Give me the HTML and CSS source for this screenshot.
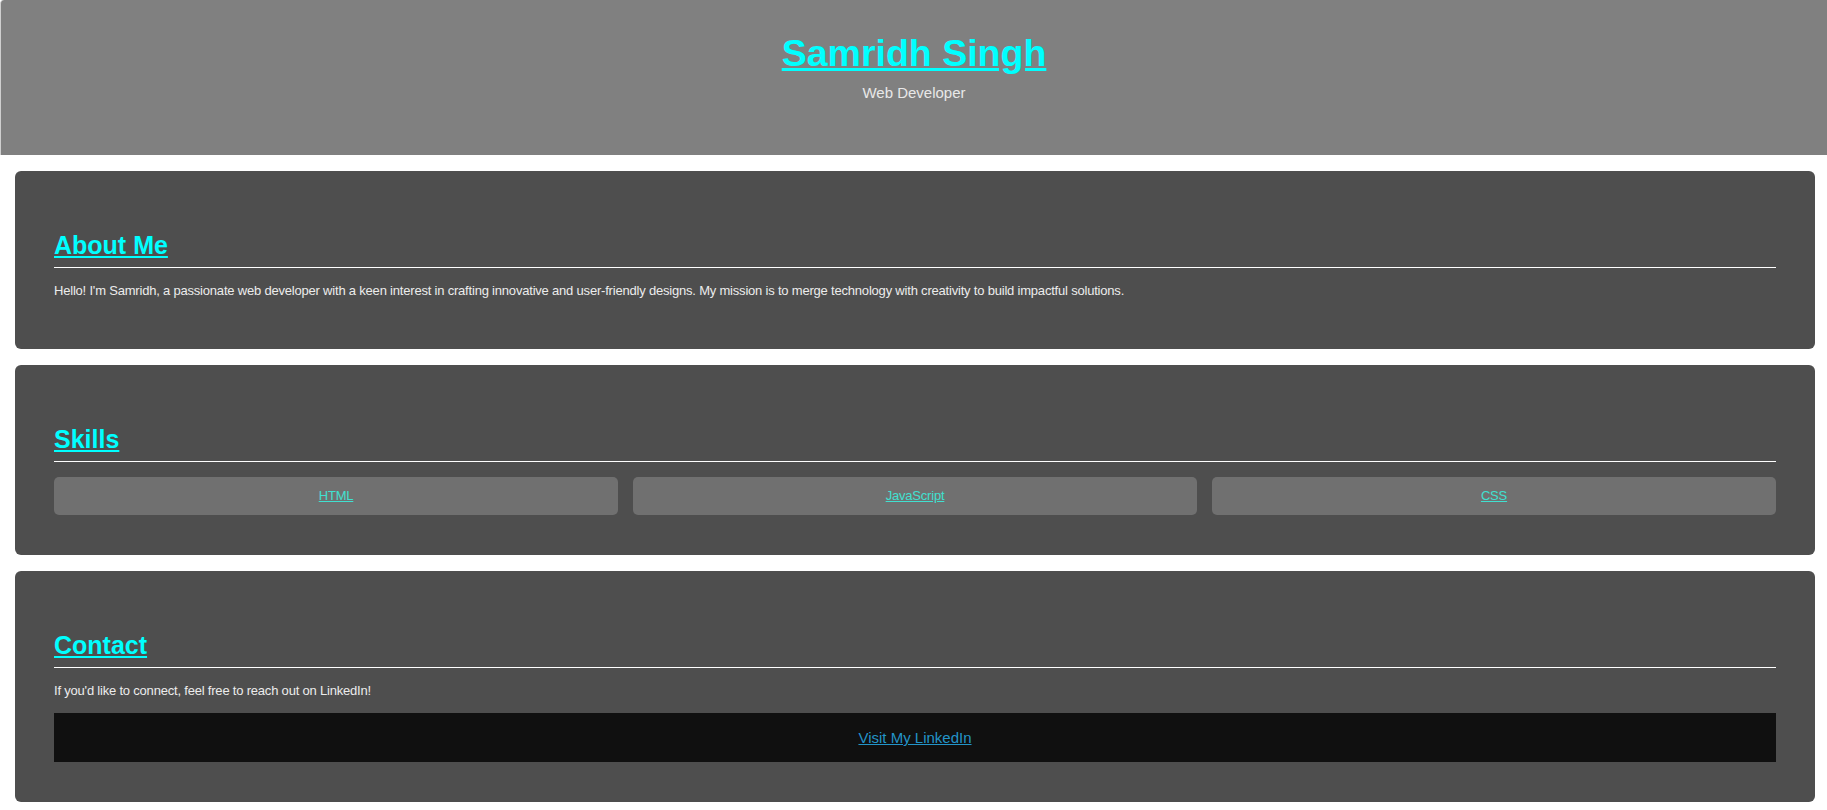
FILE: index.html
```html
<!DOCTYPE html>
<html lang="en">
<head>
<meta charset="utf-8">
<title>Samridh Singh</title>
<link rel="stylesheet" href="styles.css">
</head>
<body>
<header class="site-header">
  <h1 class="site-title"><a href="#">Samridh Singh</a></h1>
  <p class="site-subtitle">Web Developer</p>
</header>

<main class="content">
  <section class="card">
    <h2 class="card-title"><a href="#">About Me</a></h2>
    <p class="card-text">Hello! I'm Samridh, a passionate web developer with a keen interest in crafting innovative and user-friendly designs. My mission is to merge technology with creativity to build impactful solutions.</p>
  </section>

  <section class="card">
    <h2 class="card-title"><a href="#">Skills</a></h2>
    <div class="skills">
      <div class="skill"><a href="#">HTML</a></div>
      <div class="skill"><a href="#">JavaScript</a></div>
      <div class="skill"><a href="#">CSS</a></div>
    </div>
  </section>

  <section class="card">
    <h2 class="card-title"><a href="#">Contact</a></h2>
    <p class="card-text">If you'd like to connect, feel free to reach out on LinkedIn!</p>
    <div class="linkedin"><a href="#">Visit My LinkedIn</a></div>
  </section>
</main>
</body>
</html>
```

FILE: styles.css
```css
html, body {
  margin: 0;
  padding: 0;
  background: #ffffff;
}

body {
  font-family: "Liberation Sans", Arial, sans-serif;
  font-size: 15px;
  color: #e6e6e6;
}

.site-header {
  background: #808080;
  text-align: center;
  padding: 32px 20px 54px;
  border-left: 1px solid #cfcfcf;
  border-radius: 4px 0 0 0;
}

.site-title {
  margin: 0 0 9px;
  font-size: 37.5px;
  font-weight: bold;
  line-height: normal;
}

.site-title a {
  color: #00ffff;
  text-decoration: underline;
}

.site-subtitle {
  margin: 0;
  font-size: 15px;
  color: #e8e8e8;
}

.content {
  display: flex;
  flex-direction: column;
  gap: 16px;
  padding: 16px 12px 10px 15px;
}

.card {
  background: #4e4e4e;
  border-radius: 6px;
  padding: 60px 39px 36px;
}

.card-title {
  margin: 0;
  font-size: 25px;
  font-weight: bold;
  line-height: normal;
  padding-bottom: 7px;
  border-bottom: 1px solid #ffffff;
}

.card-title a {
  color: #00ffff;
  text-decoration: underline;
}

.card-text {
  margin: 14px 0 14px;
  font-size: 13px;
  letter-spacing: -0.2px;
  line-height: 17px;
  color: #ececec;
}

.skills {
  display: grid;
  grid-template-columns: repeat(3, 1fr);
  gap: 15px;
  margin: 15px 0 4px;
}

.skill {
  background: #707070;
  border-radius: 5px;
  text-align: center;
  padding: 10px 0;
  line-height: 18px;
  font-size: 13px;
  letter-spacing: -0.2px;
}

.skill a {
  color: #40e0d0;
  text-decoration: underline;
}

.linkedin {
  background: #101010;
  text-align: center;
  padding: 16px 0;
  line-height: 17px;
  margin: 1px 0 4px;
}

.linkedin a {
  color: #2394c8;
  text-decoration: underline;
  font-size: 15px;
}
```
